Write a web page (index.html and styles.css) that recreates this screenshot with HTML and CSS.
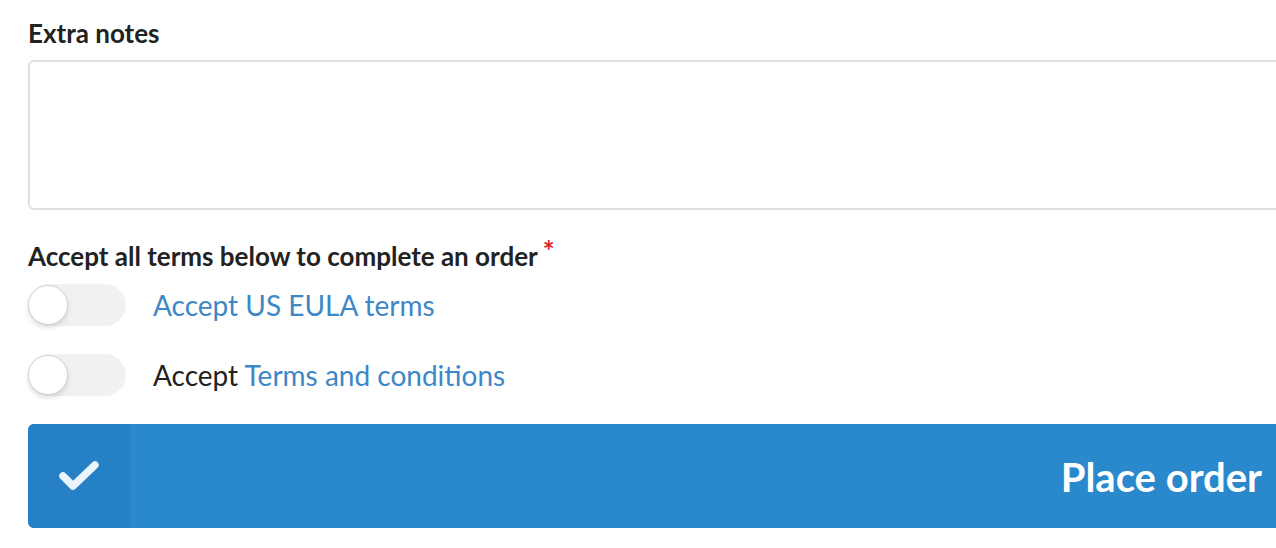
FILE: index.html
```html
<!DOCTYPE html>
<html>
<head>
<meta charset="utf-8">
<link rel="stylesheet" href="styles.css">
</head>
<body>
<div class="form">
  <label class="label notes-label">Extra notes</label>
  <textarea class="notes"></textarea>
  <div class="label terms-label">Accept all terms below to complete an order<span class="req">*</span></div>
  <div class="toggle-row">
    <span class="switch"><span class="knob"></span></span>
    <span class="toggle-text"><a class="link">Accept US EULA terms</a></span>
  </div>
  <div class="toggle-row">
    <span class="switch"><span class="knob"></span></span>
    <span class="toggle-text">Accept <a class="link">Terms and conditions</a></span>
  </div>
  <button class="order">
    <span class="order-icon">
      <svg width="40" height="30" viewBox="0 0 40 30"><path d="M4 15 L14 25 L36 4" fill="none" stroke="#eaf4fb" stroke-width="7.5" stroke-linecap="round" stroke-linejoin="round"/></svg>
    </span>
    <span class="order-text">Place order</span>
  </button>
</div>
</body>
</html>
```

FILE: styles.css
```css
html, body {
  margin: 0;
  padding: 0;
  background: #fff;
  overflow: hidden;
}
body {
  font-family: Lato, "Liberation Sans", sans-serif;
  color: #222;
}
.form {
  padding: 18px 0 0 28px;
  width: 1262px;
  display: flex;
  flex-direction: column;
}
.label {
  font-weight: 700;
  font-size: 26px;
  line-height: 30px;
  color: #222;
}
.notes-label {
  display: block;
}
.notes {
  margin-top: 12px;
  height: 150px;
  box-sizing: border-box;
  border: 2px solid #e0e0e0;
  border-radius: 6px;
  resize: none;
  width: 100%;
  font-family: inherit;
}
.terms-label {
  margin-top: 31px;
}
.req {
  color: #e0252b;
  font-size: 28px;
  vertical-align: top;
  margin-left: 5px;
  line-height: 18px;
}
.toggle-row {
  display: flex;
  align-items: center;
  height: 42px;
  margin-top: 13px;
}
.toggle-row + .toggle-row {
  margin-top: 28px;
}
.switch {
  position: relative;
  width: 98px;
  height: 42px;
  border-radius: 21px;
  background: #f1f1f1;
  flex: none;
}
.knob {
  position: absolute;
  left: 0;
  top: 1px;
  width: 38px;
  height: 38px;
  border-radius: 50%;
  background: #fff;
  border: 1px solid #d4d4d4;
  box-shadow: 0 3px 5px rgba(0,0,0,0.12);
}
.toggle-text {
  margin-left: 27px;
  font-size: 28px;
  color: #222;
  line-height: 42px;
}
.link {
  color: #3d87c7;
  text-decoration: none;
}
.order {
  margin-top: 28px;
  height: 104px;
  border: none;
  border-radius: 6px 0 0 6px;
  background: #2a88cc;
  display: flex;
  align-items: stretch;
  padding: 0;
  width: 1248px;
  font-family: inherit;
}
.order-icon {
  width: 102px;
  background: #2680c5;
  border-radius: 6px 0 0 6px;
  display: flex;
  align-items: center;
  justify-content: center;
}
.order-text {
  flex: 1;
  text-align: right;
  font-size: 40px;
  font-weight: 700;
  color: #fff;
  line-height: 106px;
  padding-right: 14px;
}
```
